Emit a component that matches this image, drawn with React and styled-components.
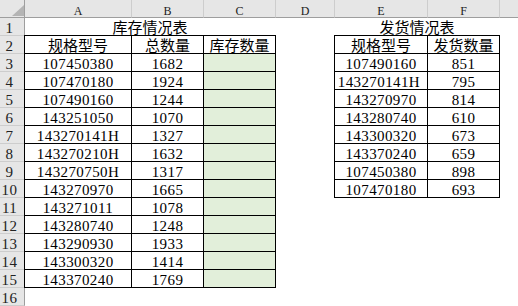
import React from "react";
import styled, { createGlobalStyle } from "styled-components";

const GlobalStyle = createGlobalStyle`
  html, body { margin: 0; padding: 0; background: #fff; }
  body { width: 518px; height: 306px; overflow: hidden; }
`;

const HEAD_BG = "#e6e6e6";
const HEAD_LINE = "#cdcdcd";
const HEAD_EDGE = "#9e9e9e";

const Sheet = styled.div`
  display: grid;
  grid-template-columns: 25px 107px 72px 72px 59px 93px 72px 72px;
  grid-template-rows: repeat(17, 18px);
  width: 518px;
  height: 306px;
  overflow: hidden;
  background: #fff;
  color: #000;
`;

const Corner = styled.div`
  position: relative;
  box-sizing: border-box;
  background: ${HEAD_BG};
  border-right: 1px solid ${HEAD_EDGE};
  border-bottom: 1px solid ${HEAD_EDGE};
  &::after {
    content: "";
    position: absolute;
    right: 0;
    bottom: 1px;
    width: 12px;
    height: 11px;
    background: #b4b4b4;
    clip-path: polygon(100% 0, 100% 100%, 0 100%);
  }
`;

const ColHead = styled.div`
  box-sizing: border-box;
  background: ${HEAD_BG};
  border-right: 1px solid ${HEAD_LINE};
  border-bottom: 1px solid ${HEAD_EDGE};
  display: flex;
  align-items: flex-end;
  justify-content: center;
  font-family: "Liberation Serif", serif;
  font-size: 12px;
  line-height: 12px;
  color: #222;
`;

const RowHead = styled.div`
  box-sizing: border-box;
  background: ${HEAD_BG};
  border-right: 1px solid ${HEAD_EDGE};
  border-bottom: 1px solid ${HEAD_LINE};
  display: flex;
  align-items: flex-end;
  justify-content: center;
  padding-right: 5px;
  font-family: "Liberation Serif", serif;
  font-size: 15px;
  line-height: 14px;
  letter-spacing: 0.4px;
  color: #222;
`;

const shadowFor = ({ $top, $left }) => {
  const s = [];
  if ($top) s.push("0 -1px 0 #000");
  if ($left) s.push("-1px 0 0 #000");
  if ($top && $left) s.push("-1px -1px 0 #000");
  return s.length ? s.join(", ") : "none";
};

const Cell = styled.div`
  box-sizing: border-box;
  grid-column: span ${(p) => p.$span || 1};
  background: ${(p) => (p.$fill ? "#e2efda" : "#fff")};
  border-right: 1px solid ${(p) => (p.$boxed ? "#000" : "transparent")};
  border-bottom: 1px solid ${(p) => (p.$boxed ? "#000" : "transparent")};
  box-shadow: ${shadowFor};
  display: flex;
  align-items: flex-end;
  justify-content: center;
  font-family: "Liberation Serif", "Noto Sans CJK SC", serif;
  font-size: 15px;
  line-height: 14px;
  letter-spacing: ${(p) => (p.$num ? "0.4px" : "0")};
  white-space: pre;
`;

const stock = [
  ["107450380", "1682"],
  ["107470180", "1924"],
  ["107490160", "1244"],
  ["143251050", "1070"],
  ["143270141H", "1327"],
  ["143270210H", "1632"],
  ["143270750H", "1317"],
  ["143270970", "1665"],
  ["143271011", "1078"],
  ["143280740", "1248"],
  ["143290930", "1933"],
  ["143300320", "1414"],
  ["143370240", "1769"],
];

const shipped = [
  ["107490160", "851"],
  ["143270141H\u00a0", "795"],
  ["143270970", "814"],
  ["143280740", "610"],
  ["143300320", "673"],
  ["143370240", "659"],
  ["107450380", "898"],
  ["107470180", "693"],
];

const LETTERS = ["A", "B", "C", "D", "E", "F", ""];

function renderRow(r) {
  const cells = [<RowHead key="h">{r}</RowHead>];
  if (r === 1) {
    cells.push(<Cell key="t1" $span={3}>库存情况表</Cell>);
    cells.push(<Cell key="d" />);
    cells.push(<Cell key="t2" $span={2}>发货情况表</Cell>);
    cells.push(<Cell key="g" />);
    return cells;
  }
  const top = r === 2;
  if (r <= 15) {
    if (top) {
      cells.push(<Cell key="a" $boxed $top $left>规格型号</Cell>);
      cells.push(<Cell key="b" $boxed $top>总数量</Cell>);
      cells.push(<Cell key="c" $boxed $top>库存数量</Cell>);
    } else {
      const [code, qty] = stock[r - 3];
      cells.push(<Cell key="a" $boxed $left $num>{code}</Cell>);
      cells.push(<Cell key="b" $boxed $num>{qty}</Cell>);
      cells.push(<Cell key="c" $boxed $fill />);
    }
  } else {
    cells.push(<Cell key="a" />, <Cell key="b" />, <Cell key="c" />);
  }
  cells.push(<Cell key="d" />);
  if (r <= 10) {
    if (top) {
      cells.push(<Cell key="e" $boxed $top $left>规格型号</Cell>);
      cells.push(<Cell key="f" $boxed $top>发货数量</Cell>);
    } else {
      const [code, qty] = shipped[r - 3];
      cells.push(<Cell key="e" $boxed $left $num>{code}</Cell>);
      cells.push(<Cell key="f" $boxed $num>{qty}</Cell>);
    }
  } else {
    cells.push(<Cell key="e" />, <Cell key="f" />);
  }
  cells.push(<Cell key="g" />);
  return cells;
}

export default function App() {
  const rows = [];
  for (let r = 1; r <= 16; r++) {
    rows.push(<React.Fragment key={r}>{renderRow(r)}</React.Fragment>);
  }
  return (
    <>
      <GlobalStyle />
      <Sheet>
        <Corner />
        {LETTERS.map((l, i) => (
          <ColHead key={i}>{l}</ColHead>
        ))}
        {rows}
      </Sheet>
    </>
  );
}
